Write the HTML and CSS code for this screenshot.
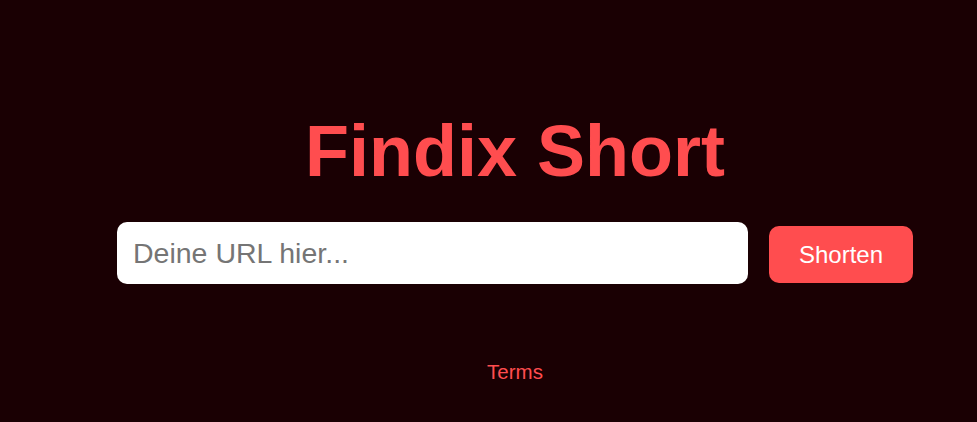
FILE: index.html
```html
<!DOCTYPE html>
<html lang="de">
<head>
<meta charset="utf-8">
<title>Findix Short</title>
<link rel="stylesheet" href="styles.css">
</head>
<body>
<main class="page">
  <h1 class="title">Findix Short</h1>
  <form class="shorten-form">
    <input class="url-input" type="text" placeholder="Deine URL hier...">
    <button class="shorten-btn" type="button">Shorten</button>
  </form>
  <footer class="footer">
    <a class="terms" href="#">Terms</a>
  </footer>
</main>
</body>
</html>
```

FILE: styles.css
```css
html, body {
  margin: 0;
  padding: 0;
  background: #1a0003;
  height: 100%;
}

body {
  font-family: "Liberation Sans", Arial, sans-serif;
}

.page {
  display: flex;
  flex-direction: column;
  align-items: center;
  padding-top: 110px;
  padding-left: 53px;
}

.title {
  margin: 0;
  font-size: 72px;
  font-weight: 700;
  line-height: normal;
  color: #ff4d4f;
}

.shorten-form {
  display: flex;
  align-items: center;
  gap: 21px;
  margin-top: 30px;
}

.url-input {
  box-sizing: border-box;
  width: 631px;
  height: 62px;
  padding: 0 16px;
  border: none;
  border-radius: 10px;
  background: #ffffff;
  font-family: "Liberation Sans", Arial, sans-serif;
  font-size: 28.5px;
  color: #333;
  outline: none;
}

.url-input::placeholder {
  color: #757575;
}

.shorten-btn {
  box-sizing: border-box;
  width: 144px;
  height: 57px;
  padding: 0 30px;
  border: none;
  border-radius: 10px;
  background: #ff4d4f;
  color: #ffffff;
  font-family: "Liberation Sans", Arial, sans-serif;
  font-size: 24px;
  cursor: pointer;
  margin-top: 3px;
}

.footer {
  margin-top: 76px;
}

.terms {
  font-size: 20.5px;
  line-height: 23px;
  color: #ff4d4f;
  text-decoration: none;
}
```
